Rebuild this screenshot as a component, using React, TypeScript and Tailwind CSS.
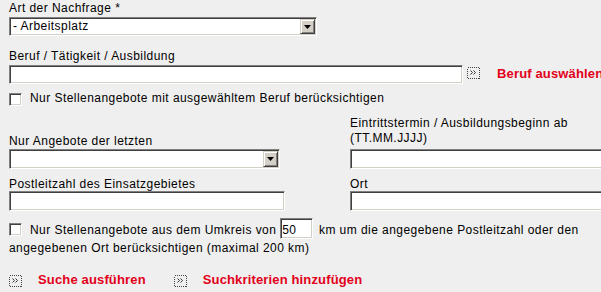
import type { ReactNode } from "react";

// Windows-classic sunken field: grey/white outer edge, dark/light inner edge
const sunken =
  "border border-t-[#808080] border-l-[#808080] border-b-white border-r-white bg-white shadow-[inset_1px_1px_0_#404040,inset_-1px_-1px_0_#d4d0c8]";

function MoreIcon({ className = "" }: { className?: string }) {
  return (
    <svg width="13" height="12" viewBox="0 0 13 12" className={`shrink-0 ${className}`}>
      <rect x="0.5" y="0.5" width="12" height="11" fill="none" stroke="#444" strokeDasharray="1 1" shapeRendering="crispEdges" />
      <path d="M3.5 3.5 L5.5 5.5 L3.5 7.5 M6.5 3.5 L8.5 5.5 L6.5 7.5" fill="none" stroke="#333" strokeWidth="1" />
    </svg>
  );
}

function Select({ value = "", className = "" }: { value?: string; className?: string }) {
  return (
    <div className={`${sunken} flex items-stretch p-[1px] ${className}`}>
      <span className="flex-1 self-center pl-[2px] leading-[15px] whitespace-nowrap">{value}</span>
      <span className="flex w-[15px] items-center justify-center border border-t-[#d4d0c8] border-l-[#d4d0c8] border-b-[#404040] border-r-[#404040] bg-[#d4d0c8] shadow-[inset_1px_1px_0_#fff,inset_-1px_-1px_0_#808080]">
        <svg width="7" height="4" viewBox="0 0 7 4">
          <polygon points="0,0 7,0 3.5,4" fill="#000" />
        </svg>
      </span>
    </div>
  );
}

function RedLink({ children, className = "" }: { children: ReactNode; className?: string }) {
  return (
    <span className={`text-[13px] font-bold leading-[15px] tracking-[0.15px] whitespace-nowrap text-[#e2001a] ${className}`}>
      {children}
    </span>
  );
}

export default function App() {
  return (
    <div className="h-[292px] w-[601px] overflow-hidden bg-[#efefef] pl-[9px] pt-[1px] font-['Liberation_Sans',Arial,sans-serif] text-[12px] tracking-[0.45px] text-black">
      <p className="leading-[14px]">Art der Nachfrage *</p>
      <Select value="- Arbeitsplatz" className="mt-[2px] h-[19px] w-[308px]" />

      <p className="mt-[13px] leading-[14px]">Beruf / Tätigkeit / Ausbildung</p>
      <div className="mt-[2px] flex items-start">
        <div className={`${sunken} h-[19px] w-[454px] shrink-0`} />
        <MoreIcon className="ml-[4px] mt-[2px]" />
        <RedLink className="ml-[17px] mt-[1px]">Beruf auswählen</RedLink>
      </div>

      <div className="mt-[7px] flex items-start">
        <span className={`${sunken} mt-[2px] h-[13px] w-[13px] shrink-0`} />
        <span className="ml-[8px] leading-[14px]">Nur Stellenangebote mit ausgewähltem Beruf berücksichtigen</span>
      </div>

      <div className="mt-[10px] grid grid-cols-[341px_280px] items-end">
        <div>
          <p className="mb-[1px] leading-[14px]">Nur Angebote der letzten</p>
          <Select className="h-[20px] w-[271px]" />
        </div>
        <div>
          <p className="leading-[15px] whitespace-nowrap">
            Eintrittstermin / Ausbildungsbeginn ab
            <br />
            (TT.MM.JJJJ)
          </p>
          <div className={`${sunken} mt-[3px] h-[20px] w-[280px]`} />
        </div>
      </div>

      <div className="mt-[8px] grid grid-cols-[341px_280px]">
        <div>
          <p className="leading-[14px]">Postleitzahl des Einsatzgebietes</p>
          <div className={`${sunken} h-[20px] w-[276px]`} />
        </div>
        <div>
          <p className="leading-[14px]">Ort</p>
          <div className={`${sunken} h-[20px] w-[280px]`} />
        </div>
      </div>

      <p className="mt-[7px] w-[592px] leading-[18px] whitespace-nowrap">
        <span className={`${sunken} mr-[8px] inline-block h-[13px] w-[13px] align-[-2px]`} />
        Nur Stellenangebote aus dem Umkreis von{" "}
        <span className={`${sunken} mr-[2px] inline-block h-[21px] w-[33px] pl-[1px] pt-[3px] leading-[16px]`}>50</span>{" "}
        km um die angegebene Postleitzahl oder den
        <br />
        angegebenen Ort berücksichtigen (maximal 200 km)
      </p>

      <div className="mt-[15px] flex items-start">
        <MoreIcon className="mt-[3px]" />
        <RedLink className="ml-[16px]">Suche ausführen</RedLink>
        <MoreIcon className="ml-[28px] mt-[3px]" />
        <RedLink className="ml-[16px]">Suchkriterien hinzufügen</RedLink>
      </div>
    </div>
  );
}
